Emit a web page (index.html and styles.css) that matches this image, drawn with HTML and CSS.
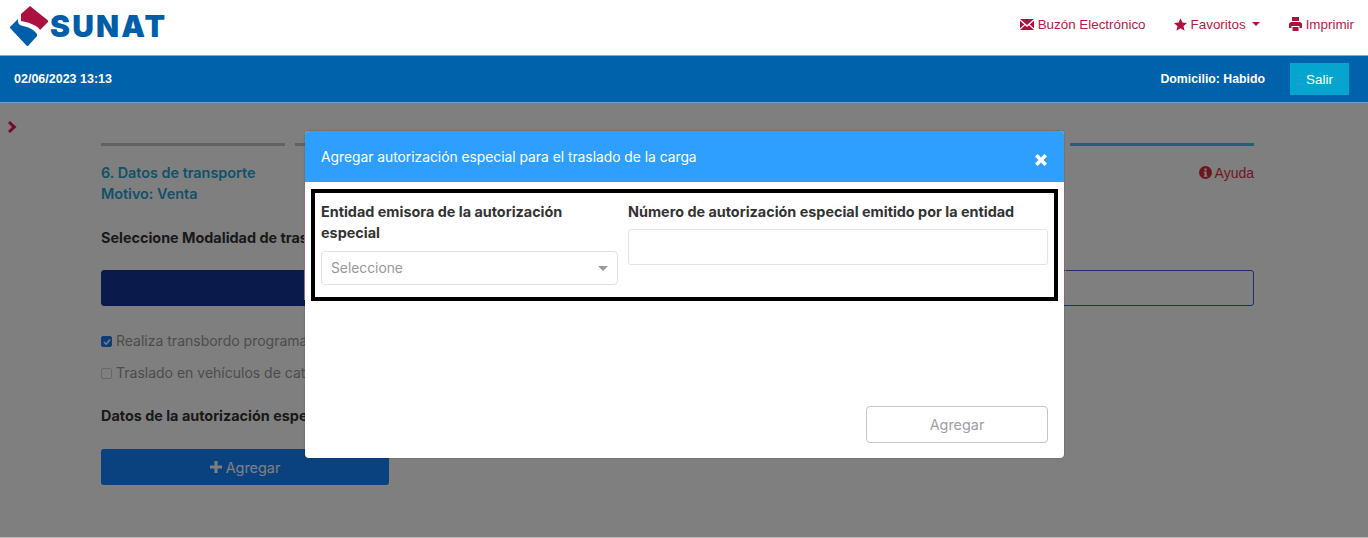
FILE: index.html
```html
<!DOCTYPE html>
<html lang="es">
<head>
  <meta charset="UTF-8">
  <meta name="viewport" content="width=device-width, initial-scale=1.0">
  <title>SUNAT - Datos de transporte</title>
  <link rel="stylesheet" href="styles.css">
</head>
<body>
  <header class="top">
    <a class="logo">
      <svg class="logo-mark" width="40" height="44" viewBox="0 0 40 44">
        <path fill="#ab1140" d="M21 2 38.700 16.300Q39.500 17 39 18L31 26Q30 24 27 22 20 18 12 17L12 10Z"/>
        <path fill="#005ea8" d="M1 23 9 15Q8 21 14 22 24 24 28 30L28 32 19.500 41.500Q18.700 42.500 17.500 41.500L1.500 24.500Q0.500 23.500 1 23Z"/>
      </svg>
      <span class="logo-text">SUNAT</span>
    </a>
    <nav class="top-nav">
      <a>
        <svg width="14" height="11" viewBox="0 0 14 11"><path d="M0 0H14L7 6ZM0 1.800V9.200L4.300 5.500ZM14 1.800V9.200L9.700 5.500ZM5 6.200 7 8 9 6.200 14 11H0Z"/></svg>
        Buzón Electrónico
      </a>
      <a>
        <svg width="13" height="13" viewBox="0 0 24 24"><path d="M12 0.500 15.500 8.500 24 9.300 17.600 15 19.500 23.500 12 19 4.500 23.500 6.400 15 0 9.300 8.500 8.500Z"/></svg>
        Favoritos <i class="caret"></i>
      </a>
      <a>
        <svg width="13" height="14" viewBox="0 0 13 14"><path d="M3 0H10V4H3ZM2 5H11L13 6.500V11H10.500V9H2.500V11H0V6.500ZM3.500 10H9.500V14H3.500Z"/></svg>
        Imprimir
      </a>
    </nav>
  </header>

  <div class="bar">
    <span class="bar-date">02/06/2023 13:13</span>
    <span class="bar-status">Domicilio: Habido</span>
    <button class="btn-exit">Salir</button>
  </div>

  <main class="page">
    <svg class="side-toggle" width="10" height="12" viewBox="0 0 10 12"><path d="M0 2 2 0 8.500 6 2 12 0 10 4 6Z"/></svg>
    <div class="content">
      <div class="steps">
        <span class="step"></span><span class="step"></span><span class="step"></span>
        <span class="step"></span><span class="step"></span><span class="step step-current"></span>
      </div>
      <div class="title-row">
        <div class="title">6. Datos de transporte<br>Motivo: Venta</div>
        <a class="help">
          <svg width="13" height="13" viewBox="0 0 13 13"><path fill-rule="evenodd" d="M6.500 0a6.500 6.500 0 1 0 0 13 6.500 6.500 0 0 0 0-13ZM5.400 2.400H7.600V4.400H5.400ZM4.800 5.500H7.600V9.500H8.400V10.800H4.800V9.500H5.500V6.800H4.800Z"/></svg>
          Ayuda
        </a>
      </div>
      <p class="section-label">Seleccione Modalidad de traslado</p>
      <div class="mode-row">
        <button class="mode mode-active">Transporte público</button>
        <button class="mode">Transporte privado</button>
      </div>
      <div class="check-row">
        <span class="check check-on"><svg width="8" height="8" viewBox="0 0 8 8"><path d="M1 4 3.200 6.200 7 1.500" fill="none" stroke="#fff" stroke-width="1.500"/></svg></span>
        Realiza transbordo programado
      </div>
      <div class="check-row">
        <span class="check"></span>
        Traslado en vehículos de categoría M1 o L
      </div>
      <p class="section-label section-auth">Datos de la autorización especial</p>
      <button class="btn-add">
        <svg width="12" height="12" viewBox="0 0 12 12"><path d="M4.500 0H7.500V4.500H12V7.500H7.500V12H4.500V7.500H0V4.500H4.500Z"/></svg>
        Agregar
      </button>
    </div>
  </main>

  <div class="backdrop"></div>
  <div class="modal-edge"></div>

  <div class="modal">
    <div class="modal-head">
      <span>Agregar autorización especial para el traslado de la carga</span>
      <svg class="modal-close" width="12" height="12" viewBox="0 0 12 12"><path d="M2.500 0 6 3.500 9.500 0 12 2.500 8.500 6 12 9.500 9.500 12 6 8.500 2.500 12 0 9.500 3.500 6 0 2.500Z"/></svg>
    </div>
    <div class="modal-body">
      <div class="form-box">
        <div class="form-col col-entity">
          <label>Entidad emisora de la autorización especial</label>
          <div class="select-fake">Seleccione <i class="select-arrow"></i></div>
        </div>
        <div class="form-col col-number">
          <label>Número de autorización especial emitido por la entidad</label>
          <input class="text-input" type="text">
        </div>
      </div>
      <div class="modal-foot">
        <button class="btn-disabled">Agregar</button>
      </div>
    </div>
  </div>
</body>
</html>
```

FILE: styles.css
```css
* {
  box-sizing: border-box;
}
html, body {
  height: 538px;
}
body {
  margin: 0;
  overflow: hidden;
  font-family: 'Inter', 'Liberation Sans', sans-serif;
  font-size: 14.400px;
  background-color: #fff;
}
button {
  font-family: inherit;
}

/* cabecera */
.top {
  height: 55px;
  display: flex;
  align-items: center;
  justify-content: space-between;
  padding: 0 14px 0 9px;
  background-color: #fff;
}
.logo {
  display: flex;
  align-items: center;
  margin-top: -4px;
}
.logo-mark {
  display: block;
}
.logo-text {
  margin-left: 1px;
  font-family: 'Inter', sans-serif;
  font-weight: 900;
  font-size: 30px;
  line-height: 1;
  letter-spacing: 2.200px;
  color: #005ea8;
}
.top-nav {
  display: flex;
  gap: 28px;
  margin-top: -7px;
}
.top-nav a {
  display: flex;
  align-items: center;
  gap: 4px;
  font-family: 'Liberation Sans', sans-serif;
  font-size: 13.400px;
  color: #b51b47;
}
.top-nav svg {
  fill: #b0123f;
}
.caret {
  width: 0;
  height: 0;
  margin: 0 1px 0 2px;
  border-left: 4px solid transparent;
  border-right: 4px solid transparent;
  border-top: 4px solid #b0123f;
}

/* barra azul */
.bar {
  height: 48px;
  display: flex;
  align-items: center;
  padding: 0 19px 0 14px;
  background-color: #0062ab;
  border-top: 1px solid #7fa9cf;
  border-bottom: 1px solid #6f9fca;
  font-family: 'Liberation Sans', sans-serif;
  color: #fff;
}
.bar-date {
  font-size: 12.500px;
  font-weight: bold;
  flex: 1;
}
.bar-status {
  font-size: 12.300px;
  font-weight: bold;
  margin-right: 25px;
}
.btn-exit {
  width: 59px;
  height: 32px;
  border: 0;
  background-color: #06a5cf;
  color: #fff;
  font-family: 'Liberation Sans', sans-serif;
  font-size: 13.400px;
}

/* contenido detras del modal */
.page {
  height: 435px;
  padding-left: 8px;
  display: flex;
  background-color: #fff;
  border-bottom: 1px solid #bbb;
}
.side-toggle {
  margin-top: 18px;
  fill: #e0195c;
  flex: none;
}
.content {
  width: 1153px;
  margin-left: 83px;
  padding-top: 40px;
}
.steps {
  display: flex;
  gap: 10px;
}
.step {
  flex: 1;
  height: 3px;
  background-color: #c4c4c4;
}
.step-current {
  background-color: #49c0ee;
}
.title-row {
  display: flex;
  justify-content: space-between;
  margin-top: 16px;
}
.title {
  font-weight: 600;
  line-height: 21px;
  color: #26a2d2;
}
.help {
  display: flex;
  align-items: center;
  align-self: flex-start;
  gap: 3px;
  height: 21px;
  font-family: 'Liberation Sans', sans-serif;
  font-size: 14px;
  color: #dd3344;
}
.help svg {
  fill: #dd2a3a;
}
.section-label {
  margin: 23px 0 0;
  font-weight: 700;
  line-height: 21px;
  color: #333;
}
.mode-row {
  display: flex;
  gap: 10px;
  margin-top: 22px;
}
.mode {
  flex: 1;
  height: 36px;
  border: 1px solid #3a5fd0;
  border-radius: 3px;
  background-color: #fff;
  color: #3a5fd0;
}
.mode-active {
  background-color: #143494;
  border-color: #143494;
  color: #fff;
}
.check-row {
  display: flex;
  align-items: center;
  gap: 4px;
  height: 21px;
  margin-top: 11px;
  font-size: 14px;
  color: #999;
}
.mode-row + .check-row {
  margin-top: 24px;
}
.check {
  width: 11px;
  height: 11px;
  display: flex;
  align-items: center;
  justify-content: center;
  margin-top: 2px;
  border: 1px solid #ccc;
  border-radius: 2px;
}
.check-on {
  background-color: #1a7be8;
  border-color: #1a7be8;
}
.section-auth {
  margin-top: 22px;
}
.btn-add {
  display: flex;
  align-items: center;
  justify-content: center;
  gap: 4px;
  width: 288px;
  height: 36px;
  margin-top: 23px;
  border: 0;
  border-radius: 3px;
  background-color: #1584ff;
  color: #fff;
  font-size: 14.400px;
}
.btn-add svg {
  fill: #fff;
}

/* modal */
.backdrop {
  position: absolute;
  top: 103px;
  left: 0;
  right: 0;
  bottom: 1px;
  background-color: rgba(0,0,0,0.5);
}
.modal-edge {
  position: absolute;
  top: 190px;
  left: 304px;
  width: 762px;
  height: 110px;
  border: 1px solid #a5737d;
}
.modal {
  position: absolute;
  top: 131px;
  left: 305px;
  width: 759px;
  height: 327px;
  border-radius: 4px;
  overflow: hidden;
  background-color: #fff;
  box-shadow: 0 0 2px rgba(0,0,0,0.3);
}
.modal-head {
  height: 51px;
  display: flex;
  align-items: center;
  justify-content: space-between;
  padding: 0 17px 0 16px;
  background-color: #2f9fff;
  font-size: 13.800px;
  color: #fff;
}
.modal-close {
  margin-top: 7px;
  fill: #fff;
}
.modal-body {
  padding: 7px 6px 0;
}
.form-box {
  display: flex;
  gap: 10px;
  height: 112px;
  padding: 8px 6px 0;
  border: 4px solid #000;
}
.form-box label {
  display: block;
  font-weight: 700;
  line-height: 21px;
  color: #333;
}
.col-entity {
  width: 297px;
}
.col-number {
  width: 420px;
}
.select-fake {
  position: relative;
  height: 34px;
  margin-top: 8px;
  padding-left: 9px;
  border: 1px solid #e0e0e0;
  border-radius: 4px;
  font-size: 13.800px;
  line-height: 32px;
  color: #999;
}
.select-arrow {
  position: absolute;
  top: 14px;
  right: 9px;
  border-left: 5px solid transparent;
  border-right: 5px solid transparent;
  border-top: 5px solid #999;
}
.text-input {
  display: block;
  width: 100%;
  height: 36px;
  margin-top: 7px;
  border: 1px solid #e4e4e8;
  border-radius: 3px;
  background-color: #fff;
}
.modal-foot {
  display: flex;
  justify-content: flex-end;
  padding: 105px 10px 0 0;
}
.btn-disabled {
  width: 182px;
  height: 37px;
  border: 1px solid #c4c4c8;
  border-radius: 4px;
  background-color: #fff;
  color: #a0a0a4;
  font-size: 14.400px;
}
```
